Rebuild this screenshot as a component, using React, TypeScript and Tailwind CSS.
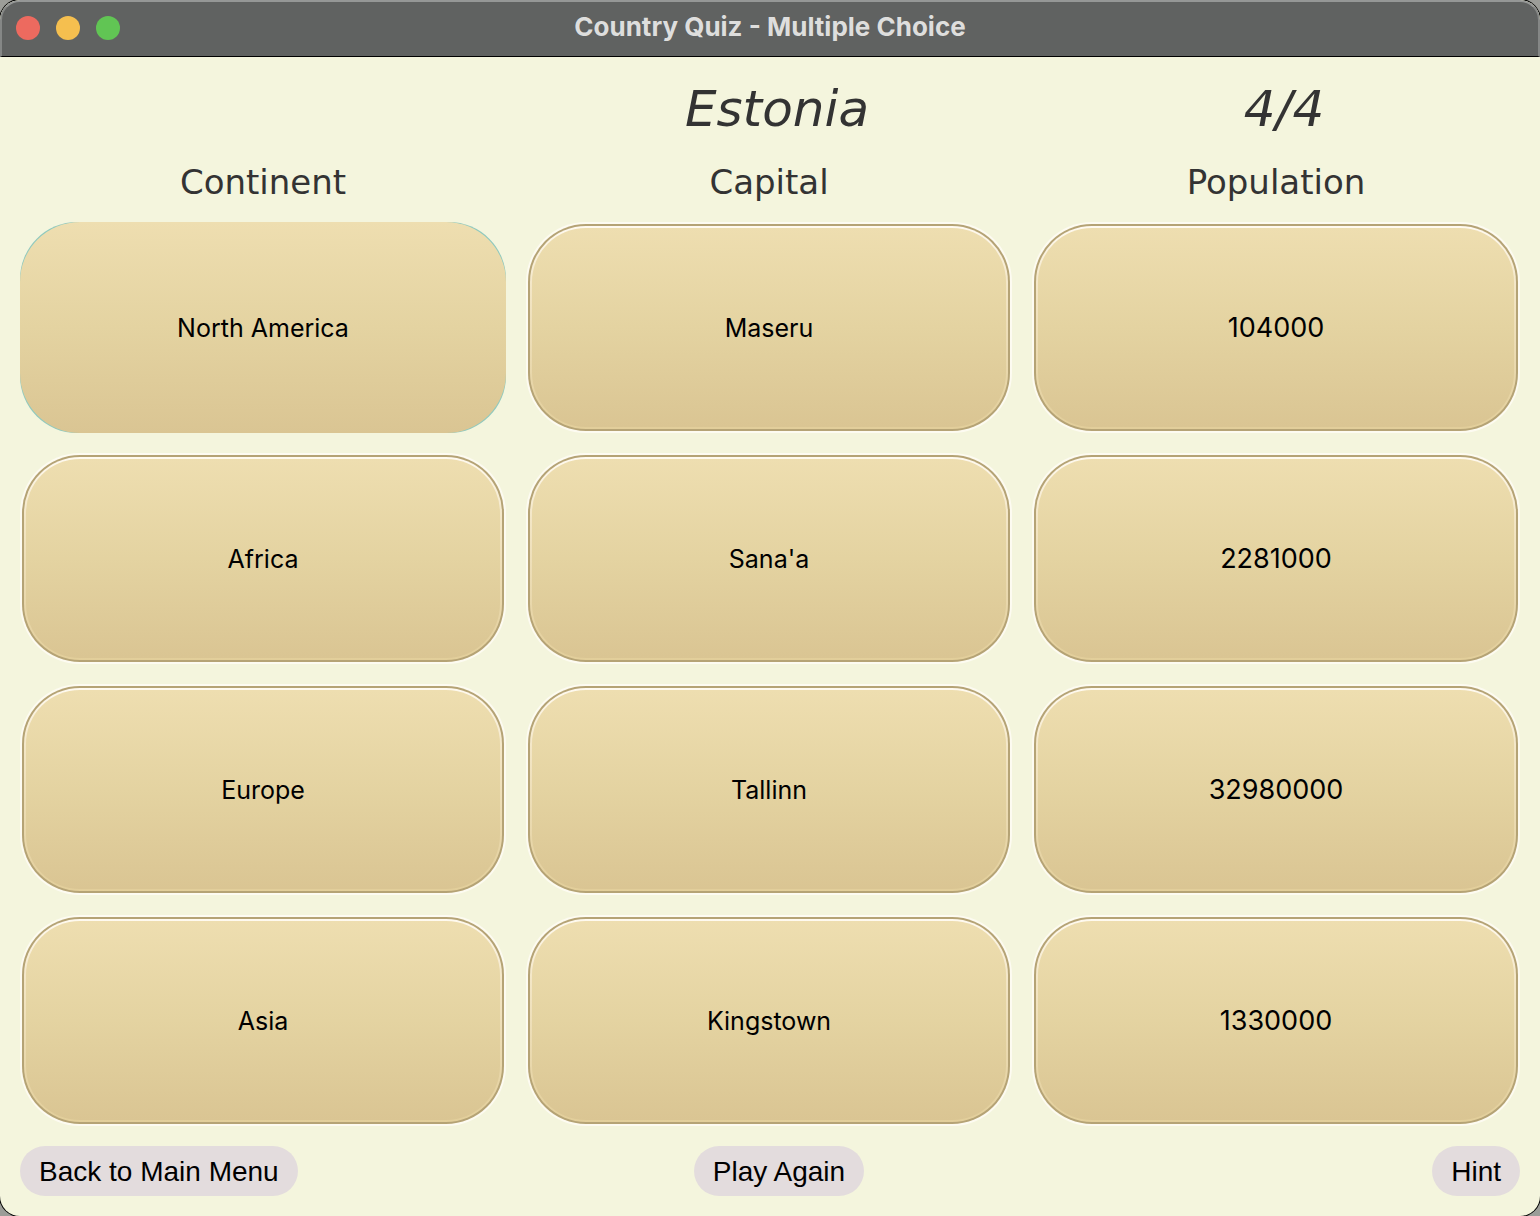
import { useState } from "react";

type Column = { title: string; answers: string[]; textSize: string };

const columns: Column[] = [
  {
    title: "Continent",
    answers: ["North America", "Africa", "Europe", "Asia"],
    textSize: "text-[25px]",
  },
  {
    title: "Capital",
    answers: ["Maseru", "Sana'a", "Tallinn", "Kingstown"],
    textSize: "text-[25px]",
  },
  {
    title: "Population",
    answers: ["104000", "2281000", "32980000", "1330000"],
    textSize: "text-[27px]",
  },
];

function AnswerButton({
  label,
  focused,
  onFocus,
}: {
  label: string;
  focused: boolean;
  onFocus: () => void;
}) {
  if (focused) {
    return (
      <button
        type="button"
        onClick={onFocus}
        className="flex min-h-24 w-full rounded-[57px] bg-[#8fc9be] text-black outline-none"
      >
        <span className="flex w-full items-center justify-center self-stretch rounded-[60px] bg-linear-to-b from-[#eedeb0] via-[#e4d3a1] to-[#dac593] pt-0.5">
          {label}
        </span>
      </button>
    );
  }
  return (
    <button
      type="button"
      onClick={onFocus}
      className="flex min-h-24 w-full rounded-[60px] bg-[#fdfbf1] p-0.5 text-black outline-none"
    >
      <span className="flex w-full self-stretch rounded-[58px] bg-[#b5a375] p-0.5">
        <span className="flex w-full self-stretch rounded-[56px] bg-linear-to-b from-[#fffaf0] from-0% via-[#f3e6c6] via-30% to-[#e2ce9a] p-0.5">
          <span className="flex w-full items-center justify-center self-stretch rounded-[54px] bg-linear-to-b from-[#eedeb0] via-[#e4d3a1] to-[#dac593] pt-0.5">
            {label}
          </span>
        </span>
      </span>
    </button>
  );
}

function PillButton({ label }: { label: string }) {
  return (
    <button
      type="button"
      className="h-[50px] rounded-full bg-[#e3dcdd] px-[19px] pt-0.5 font-['Liberation_Sans',sans-serif] text-[28px] whitespace-nowrap text-black"
    >
      {label}
    </button>
  );
}

export default function App() {
  const [focused, setFocused] = useState("North America");

  return (
    <div className="flex min-h-screen bg-[#9c9d98]">
      <div className="flex flex-1 flex-col overflow-hidden rounded-[20px] bg-[#f4f5dd] shadow-[0_0_0_1px_#000]">
        <header className="grid h-[57px] grid-cols-[1fr_auto_1fr] items-center rounded-t-[20px] border-x-2 border-t-2 border-b border-x-[#858786] border-t-[#959796] border-b-black bg-[#606261] px-3.5 pb-0.5">
          <div className="flex gap-4">
            <button type="button" aria-label="Close" className="size-6 rounded-full bg-[#ed6a5f]" />
            <button type="button" aria-label="Minimize" className="size-6 rounded-full bg-[#f5bf4f]" />
            <button type="button" aria-label="Zoom" className="size-6 rounded-full bg-[#61c554]" />
          </div>
          <h1 className="pb-0.5 font-[Inter,sans-serif] text-[26px] leading-8 font-bold text-[#dededd]">
            Country Quiz - Multiple Choice
          </h1>
        </header>

        <main className="flex flex-1 flex-col px-5 pb-5">
          <div className="grid grid-cols-[486fr_486fr_488fr] gap-x-5 pt-[22px] text-center font-['DejaVu_Sans',Verdana,sans-serif] text-[50px] leading-[60px] text-[#333333] italic">
            <h2 className="col-start-2 pl-4">Estonia</h2>
            <p className="pl-4">4/4</p>
          </div>

          <div className="grid flex-1 grid-cols-[486fr_486fr_488fr] gap-x-5">
            {columns.map((column) => (
              <section key={column.title} className="flex flex-col gap-5">
                <h3 className="pt-[23px] text-center font-['DejaVu_Sans',Verdana,sans-serif] text-[34px] leading-10 text-[#333333]">
                  {column.title}
                </h3>
                <div
                  className={`grid flex-1 auto-rows-fr gap-5 font-[Inter,sans-serif] ${column.textSize}`}
                >
                  {column.answers.map((answer) => (
                    <AnswerButton
                      key={answer}
                      label={answer}
                      focused={focused === answer}
                      onFocus={() => setFocused(answer)}
                    />
                  ))}
                </div>
              </section>
            ))}
          </div>

          <footer className="grid grid-cols-[486fr_486fr_488fr] gap-x-5 pt-5">
            <div className="flex">
              <PillButton label="Back to Main Menu" />
            </div>
            <div className="flex justify-center pl-5">
              <PillButton label="Play Again" />
            </div>
            <div className="flex justify-end">
              <PillButton label="Hint" />
            </div>
          </footer>
        </main>
      </div>
    </div>
  );
}
